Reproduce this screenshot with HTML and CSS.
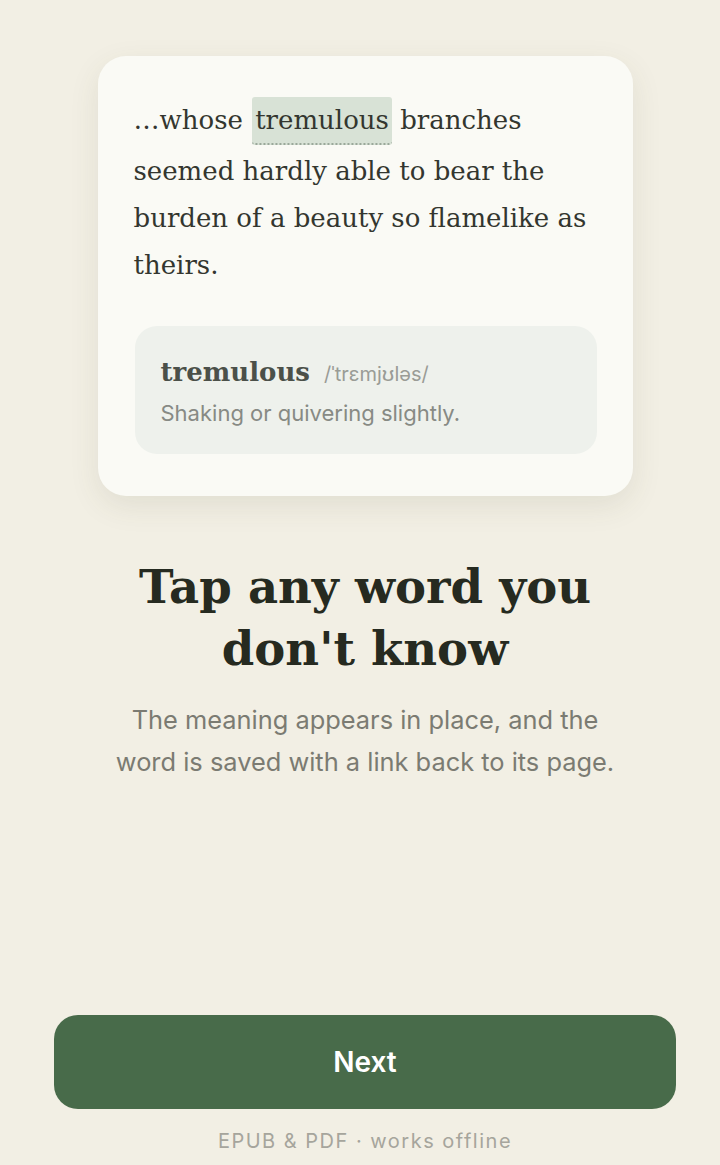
FILE: index.html
```html
<html>
  <head>
    <meta charset="utf-8" />
    <link rel="stylesheet" href="styles.css">
  </head>
  <body>
    <div class="onboard">
      <div class="onboard__card">
        <p class="onboard__passage">…whose <span class="onboard__word">tremulous</span> branches<br>seemed hardly able to bear the<br>burden of a beauty so flamelike as<br>theirs.</p>
        <div class="onboard__gloss">
          <div class="onboard__glossHead">
            <span class="onboard__glossWord">tremulous</span>
            <span class="onboard__glossIpa">/ˈtrɛmjʊləs/</span>
          </div>
          <div class="onboard__glossDef">Shaking or quivering slightly.</div>
        </div>
      </div>

      <h1 class="onboard__title">Tap any word you don't know</h1>
      <p class="onboard__text">The meaning appears in place, and the word is saved with a link back to its page.</p>

      <div class="onboard__footer">
        <button class="onboard__button" type="button">Next</button>
        <div class="onboard__note">EPUB &amp; PDF · works offline</div>
      </div>
    </div>
  </body>
</html>
```

FILE: styles.css
```css
body {
  margin: 0;
  background-color: #f2efe4;
}

.onboard {
  box-sizing: border-box;
  height: 1165px;
  display: flex;
  flex-direction: column;
  align-items: center;
  padding: 56px 44px 0 54px;
}

.onboard__card {
  box-sizing: border-box;
  width: 535px;
  padding: 41px 30px 42px 36px;
  background-color: #fafaf5;
  border-radius: 28px;
  box-shadow: 0 10px 30px rgba(80, 75, 50, 0.10);
}

.onboard__passage {
  margin: 0;
  font-family: "DejaVu Serif", serif;
  font-size: 26px;
  line-height: 47px;
  color: #33362f;
}

.onboard__word {
  display: inline-block;
  line-height: 40px;
  margin: 0 0 3px 1px;
  padding: 3px 3px 3px;
  background-color: #d8e2d6;
  border-radius: 3px;
  border-bottom: 2px dotted #9aa89a;
}

.onboard__gloss {
  margin-top: 37px;
  margin-right: 6px;
  margin-left: 1px;
  padding: 28px 26px 26px;
  background-color: #eef1ec;
  border-radius: 22px;
}

.onboard__glossHead {
  display: flex;
  align-items: baseline;
  gap: 14px;
  line-height: 36px;
}

.onboard__glossWord {
  font-family: "DejaVu Serif", serif;
  font-weight: bold;
  font-size: 26px;
  color: #4b5049;
}

.onboard__glossIpa {
  font-family: Inter, sans-serif;
  font-size: 20px;
  color: #9a9c96;
}

.onboard__glossDef {
  margin-top: 6px;
  font-family: Inter, sans-serif;
  font-size: 22px;
  line-height: 30px;
  color: #878a84;
}

.onboard__title {
  max-width: 520px;
  margin: 60px 0 0;
  text-align: center;
  font-family: "DejaVu Serif", serif;
  font-weight: bold;
  font-size: 46.5px;
  line-height: 62px;
  color: #262a20;
}

.onboard__text {
  max-width: 520px;
  margin: 19px 0 0;
  text-align: center;
  font-family: Inter, sans-serif;
  font-size: 25.4px;
  line-height: 42px;
  color: #7b7b72;
}

.onboard__footer {
  margin-top: auto;
  width: 100%;
  display: flex;
  flex-direction: column;
  align-items: center;
  padding: 0 0 12px;
}

.onboard__button {
  width: 622px;
  height: 94px;
  border: none;
  border-radius: 24px;
  background-color: #486b4a;
  color: #fff;
  font-family: Inter, sans-serif;
  font-weight: 600;
  font-size: 28px;
  cursor: pointer;
}

.onboard__note {
  margin-top: 20px;
  font-family: Inter, sans-serif;
  font-size: 20px;
  letter-spacing: 1.5px;
  color: #a6a59c;
}
```
